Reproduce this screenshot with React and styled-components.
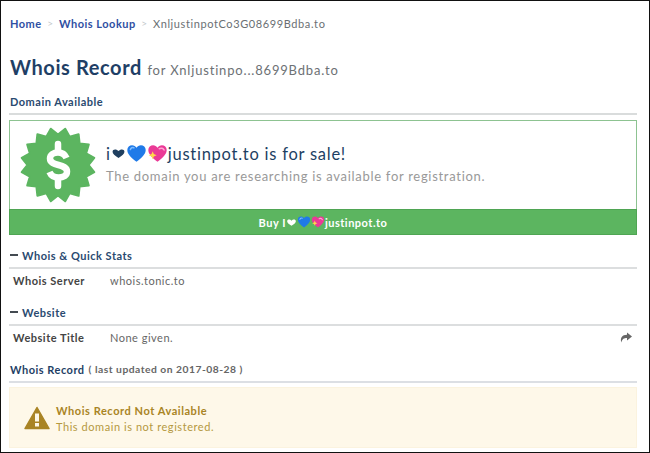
import React from "react";
import styled, { createGlobalStyle } from "styled-components";

const GlobalStyle = createGlobalStyle`
  html, body {
    margin: 0;
    padding: 0;
    background: #fff;
  }
  * {
    box-sizing: border-box;
  }
`;

const HEART =
  "M12 21.5C5.5 16.5 1.5 12.6 1.5 8A5.6 5.6 0 0 1 7 2.5c2 0 3.900 1 5 2.800 1.100-1.800 3-2.800 5-2.800A5.600 5.600 0 0 1 22.500 8c0 4.600-4 8.500-10.500 13.500z";

const PlainHeart = ({ size, color }) => (
  <Emoji viewBox="0 0 24 24" $size={size}>
    <path d="M12 19C6 15 2.500 12.200 2.500 9 2.500 6.700 4.400 5.500 6.400 5.500c2.300 0 4.200 1.100 5.600 2.600 1.400-1.500 3.300-2.600 5.600-2.600 2 0 3.900 1.200 3.900 3.500 0 3.200-3.500 6-9.500 10z" fill={color} />
  </Emoji>
);

const BlueHeart = ({ size }) => (
  <Emoji viewBox="0 0 24 24" $size={size}>
    <path d={HEART} fill="#1f7ae8" />
    <path d="M5 7.500C5.500 5.500 7.500 4.800 9 5.500" stroke="#7dbcff" strokeWidth="1.800" fill="none" strokeLinecap="round" />
  </Emoji>
);

const SparkleHeart = ({ size }) => (
  <Emoji viewBox="0 0 24 24" $size={size}>
    <path d={HEART} fill="#ea3a96" />
    <path d="M14 6.500c2-1 4.500-.5 5.500 1.500" stroke="#ffa6d4" strokeWidth="1.800" fill="none" strokeLinecap="round" />
    <path d="M6.500 9.500l1.300 3.200 3.200 1.300-3.200 1.300-1.300 3.200-1.300-3.200L2 14l3.200-1.300z" fill="#ffd84a" />
  </Emoji>
);

const Hearts = ({ sizes, color }) => (
  <>
    <PlainHeart size={sizes[0]} color={color} />
    <BlueHeart size={sizes[1]} />
    <SparkleHeart size={sizes[1]} />
  </>
);

const sealPoints = () => {
  const pts = [];
  const n = 16;
  for (let i = 0; i < n * 2; i++) {
    const r = i % 2 === 0 ? 37 : 30.5;
    const a = (Math.PI * (i + 1)) / n - Math.PI / 2;
    pts.push((38 + r * Math.cos(a)).toFixed(1) + "," + (38 + r * Math.sin(a)).toFixed(1));
  }
  return pts.join(" ");
};

const Seal = () => (
  <SealBox>
    <svg viewBox="0 0 76 76" width="76" height="76">
      <polygon points={sealPoints()} fill="#5cb560" stroke="#5cb560" strokeWidth="2" strokeLinejoin="round" />
      <path
        d="M46.500 31C45 27.500 42 25.500 38 25.500c-4.500 0-8 2.300-8 6 0 8.500 17 4.500 17 13 0 4-3.500 6-8.500 6-4.500 0-7.500-2-9-5.500"
        fill="none"
        stroke="#fff"
        strokeWidth="6.500"
      />
      <path d="M38 17v7M38 52v7" stroke="#fff" strokeWidth="6.500" strokeLinecap="round" />
    </svg>
  </SealBox>
);

const Warning = () => (
  <svg viewBox="0 0 26 24" width="26" height="24">
    <path d="M13 1.500L25 22.500H1z" fill="#a98425" stroke="#a98425" strokeWidth="1.500" strokeLinejoin="round" />
    <rect x="11" y="7.500" width="4" height="8" fill="#fdf7e6" />
    <rect x="11" y="17" width="4" height="3.500" fill="#fdf7e6" />
  </svg>
);

const ShareArrow = () => (
  <svg viewBox="0 0 12 11" width="12" height="11">
    <path d="M7 .5L12 4.500 7 8.500V6C4 6 2.300 6.800 1.300 10.500 0 6 2 2.800 7 2.800z" fill="#666" />
  </svg>
);

export default function App() {
  return (
    <>
      <GlobalStyle />
      <Frame>
        <Crumbs>
          <CrumbLink>Home</CrumbLink>
          <CrumbSep>&gt;</CrumbSep>
          <CrumbLink>Whois Lookup</CrumbLink>
          <CrumbSep>&gt;</CrumbSep>
          <CrumbCurrent>XnljustinpotCo3G08699Bdba.to</CrumbCurrent>
        </Crumbs>

        <PageTitle>
          Whois Record <small>for Xnljustinpo...8699Bdba.to</small>
        </PageTitle>

        <SectionHead>Domain Available</SectionHead>

        <SaleCard>
          <SaleBody>
            <Seal />
            <SaleCopy>
              <SaleTitle>
                i<Hearts sizes={[15, 21]} color="#1f3f5f" />justinpot.to is for sale!
              </SaleTitle>
              <SaleText>The domain you are researching is available for registration.</SaleText>
            </SaleCopy>
          </SaleBody>
          <BuyBar>
            Buy I<Hearts sizes={[11, 14]} color="#fff" />justinpot.to
          </BuyBar>
        </SaleCard>

        <SubHead>
          <Dash />
          Whois &amp; Quick Stats
        </SubHead>
        <Row>
          <RowLabel>Whois Server</RowLabel>
          <RowValue>whois.tonic.to</RowValue>
        </Row>

        <SubHead>
          <Dash />
          Website
        </SubHead>
        <Row>
          <RowLabel>Website Title</RowLabel>
          <RowValue>None given.</RowValue>
          <RowAction>
            <ShareArrow />
          </RowAction>
        </Row>

        <RecordHead>
          Whois Record <span>( last updated on 2017-08-28 )</span>
        </RecordHead>

        <Notice>
          <Warning />
          <NoticeCopy>
            <NoticeTitle>Whois Record Not Available</NoticeTitle>
            <NoticeText>This domain is not registered.</NoticeText>
          </NoticeCopy>
        </Notice>
      </Frame>
    </>
  );
}

const Frame = styled.div`
  width: 650px;
  height: 453px;
  overflow: hidden;
  background: #fff;
  border: 1px solid #111;
  padding: 0 12px 0 8px;
  font-family: Lato, "Noto Sans", sans-serif;
  letter-spacing: 0.5px;
`;

const Crumbs = styled.div`
  display: flex;
  align-items: center;
  height: 16px;
  margin-top: 14px;
  padding-left: 1px;
  font-size: 11px;
`;

const CrumbLink = styled.span`
  color: #2f4fa3;
  font-weight: 700;
`;

const CrumbSep = styled.span`
  color: #c4c8cc;
  margin: 0 5.500px;
  font-size: 10px;
`;

const CrumbCurrent = styled.span`
  color: #6a6f73;
  letter-spacing: 0.6px;
`;

const PageTitle = styled.h1`
  margin: 22px 0 0;
  padding-left: 1px;
  height: 28px;
  line-height: 28px;
  font-size: 20px;
  font-weight: 700;
  color: #1f3f66;
  letter-spacing: 0.6px;

  small {
    font-size: 13px;
    font-weight: 400;
    color: #6d7175;
    letter-spacing: 0.82px;
  }
`;

const SectionHead = styled.div`
  margin-top: 13px;
  padding-left: 1px;
  height: 16px;
  line-height: 16px;
  font-size: 11px;
  font-weight: 700;
  color: #2a4a70;
`;

const SaleCard = styled.div`
  margin: 3px 0 2px;
  border-top: 2px solid #d9dcdc;
  padding-top: 5px;
`;

const SaleBody = styled.div`
  display: flex;
  align-items: center;
  gap: 10px;
  height: 89px;
  padding-left: 10px;
  border: 1px solid #8dc391;
  border-bottom: 0;
`;

const SealBox = styled.div`
  display: flex;
  flex: none;
  width: 76px;
  height: 76px;
`;

const SaleCopy = styled.div`
  padding-bottom: 3px;
`;

const SaleTitle = styled.div`
  display: flex;
  align-items: center;
  height: 22px;
  font-size: 16.500px;
  color: #1d3f63;
  white-space: pre;
  letter-spacing: 0.75px;
`;

const SaleText = styled.div`
  margin-top: 2px;
  font-size: 13px;
  line-height: 18px;
  color: #999;
  letter-spacing: 0.7px;
`;

const Emoji = styled.svg`
  flex: none;
  width: ${(p) => p.$size}px;
  height: ${(p) => p.$size}px;
`;

const BuyBar = styled.div`
  display: flex;
  align-items: center;
  justify-content: center;
  height: 26px;
  background: #5cb560;
  border: 1px solid #4fa553;
  color: #fff;
  font-size: 11px;
  font-weight: 700;
`;

const SubHead = styled.div`
  display: flex;
  align-items: center;
  height: 32px;
  padding-top: 6px;
  font-size: 11px;
  font-weight: 700;
  color: #2a4a70;
  border-bottom: 2px solid #dcdedf;
`;

const Dash = styled.span`
  width: 8px;
  height: 2px;
  margin: 0 4px 0 1px;
  background: #444b52;
`;

const Row = styled.div`
  display: flex;
  align-items: center;
  height: 25px;
  padding-bottom: 2px;
  font-size: 11px;
`;

const RowLabel = styled.div`
  width: 101px;
  padding-left: 4px;
  font-weight: 700;
  color: #444;
`;

const RowValue = styled.div`
  flex: 1;
  color: #666;
`;

const RowAction = styled.div`
  display: flex;
  margin-right: 5px;
`;

const RecordHead = styled.div`
  display: flex;
  align-items: center;
  gap: 4px;
  height: 32px;
  padding: 6px 0 0 1px;
  font-size: 11px;
  font-weight: 700;
  color: #1f3f66;
  border-bottom: 2px solid #dcdfe4;

  span {
    font-size: 10.300px;
    color: #666;
  }
`;

const Notice = styled.div`
  display: flex;
  align-items: center;
  gap: 6px;
  height: 61px;
  margin-top: 4px;
  padding-left: 14px;
  background: #fef8e9;
  border: 1px solid #fbf3df;
`;

const NoticeCopy = styled.div`
  padding-top: 2px;
  letter-spacing: 0.56px;
`;

const NoticeTitle = styled.div`
  font-size: 11px;
  line-height: 16px;
  font-weight: 700;
  color: #a98425;
`;

const NoticeText = styled.div`
  font-size: 11px;
  line-height: 16px;
  color: #b5983f;
`;
